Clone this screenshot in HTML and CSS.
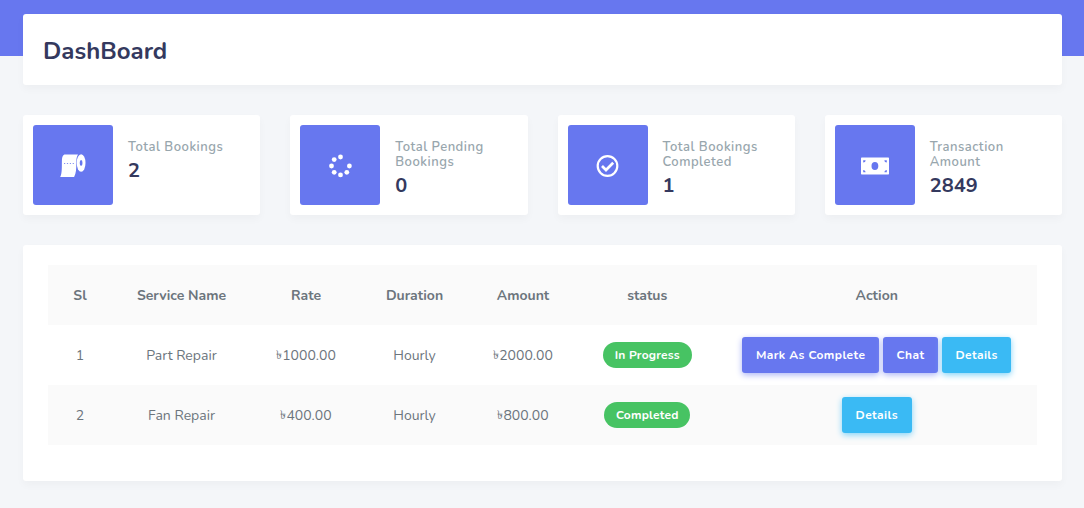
FILE: index.html
```html
<!DOCTYPE html>
<html lang="en">
<head>
<meta charset="utf-8">
<title>DashBoard</title>
<link rel="stylesheet" href="styles.css">
</head>
<body>
<main class="main">
  <header class="section-header"><h1>DashBoard</h1></header>
  <section class="stats">
    <article class="card stat">
      <div class="stat-icon">
        <svg width="28" height="28" viewBox="0 0 28 28" fill="#fff"><path d="M5.4 2.4H19C17.6 4.5 17.3 7 17.3 11c0 6-.1 10-2.2 14H1.2C3.2 21 2.8 15 2.9 9c0-3 .4-5.5 2.5-6.6z"/><ellipse cx="22.1" cy="11" rx="4.4" ry="8.7"/><ellipse cx="22.1" cy="11" rx="1.4" ry="2.9" fill="#6777ef"/><path d="M5 11.5h10" stroke="#6777ef" stroke-width=".8" stroke-dasharray="1.2 1.7"/></svg>
      </div>
      <div class="stat-body"><h2>Total Bookings</h2><p>2</p></div>
    </article>
    <article class="card stat">
      <div class="stat-icon">
        <svg width="28" height="28" viewBox="0 0 28 28" fill="#fff"><circle cx="14.5" cy="5" r="2.4"/><circle cx="8.2" cy="7.6" r="2.4"/><circle cx="5.5" cy="14" r="2.4"/><circle cx="8.2" cy="20.3" r="2.4"/><circle cx="14.5" cy="22.9" r="2.4"/><circle cx="20.8" cy="20.3" r="2.4"/><circle cx="23.4" cy="14" r="2.4"/></svg>
      </div>
      <div class="stat-body"><h2>Total Pending<br>Bookings</h2><p>0</p></div>
    </article>
    <article class="card stat">
      <div class="stat-icon">
        <svg width="28" height="28" viewBox="0 0 28 28" fill="none" stroke="#fff"><circle cx="13.5" cy="14" r="9.8" stroke-width="2.2"/><path d="M8 14l4 4 7.2-7.2" stroke-width="2.7"/></svg>
      </div>
      <div class="stat-body"><h2>Total Bookings<br>Completed</h2><p>1</p></div>
    </article>
    <article class="card stat">
      <div class="stat-icon">
        <svg width="28" height="28" viewBox="0 0 28 28"><rect y="5.5" width="28" height="17" rx=".7" fill="#fff"/><g fill="#6777ef"><ellipse cx="13.9" cy="14" rx="3.4" ry="4"/><path d="M2.2 8.3h2.4c0 1.3-1 2.3-2.4 2.3zM25.8 8.3h-2.4c0 1.3 1 2.3 2.4 2.3zM2.2 20.2h2.4c0-1.3-1-2.3-2.4-2.3zM25.8 20.2h-2.4c0-1.3 1-2.3 2.4-2.3z"/></g></svg>
      </div>
      <div class="stat-body"><h2>Transaction<br>Amount</h2><p>2849</p></div>
    </article>
  </section>
  <section class="card bookings">
    <table>
      <colgroup><col class="c-sl"><col class="c-name"><col class="c-rate"><col class="c-duration"><col class="c-amount"><col class="c-status"><col></colgroup>
      <thead><tr><th>Sl</th><th>Service Name</th><th>Rate</th><th>Duration</th><th>Amount</th><th>status</th><th>Action</th></tr></thead>
      <tbody>
        <tr><td>1</td><td>Part Repair</td><td><span class="taka">৳</span>1000.00</td><td>Hourly</td><td><span class="taka">৳</span>2000.00</td><td class="flush"><span class="badge progress">In Progress</span></td>
          <td class="flush"><div class="actions"><button class="btn mark">Mark As Complete</button><button class="btn chat">Chat</button><button class="btn info">Details</button></div></td></tr>
        <tr><td>2</td><td>Fan Repair</td><td><span class="taka">৳</span>400.00</td><td>Hourly</td><td><span class="taka">৳</span>800.00</td><td class="flush"><span class="badge completed">Completed</span></td>
          <td class="flush"><div class="actions"><button class="btn info">Details</button></div></td></tr>
      </tbody>
    </table>
  </section>
</main>
</body>
</html>
```
FILE: styles.css
```css
* { box-sizing: border-box; }
body {
  margin: 0;
  min-height: 508px;
  background: linear-gradient(#6777ef 56px, #f4f6f9 56px);
  color: #6c757d;
  font: 14px/24px Nunito, Lato, "Noto Sans", sans-serif;
}
h1, h2, p { margin: 0; }
.main { display: flex; flex-direction: column; gap: 30px; padding: 14px 22px 0 23px; }
.section-header, .card { background: #fff; border-radius: 3px; box-shadow: 0 4px 8px rgba(0, 0, 0, .03); }
.section-header { height: 71px; padding: 22px 20px 20px; display: flex; align-items: center; }
.section-header h1 { font-size: 24px; line-height: 34px; font-weight: 700; color: #34395e; }
.stats { display: grid; grid-template-columns: repeat(4, 1fr); gap: 30px; }
.stat { height: 100px; padding: 10px; display: flex; gap: 15px; }
.stat-icon { width: 80px; height: 80px; padding-top: 1px; border-radius: 3px; background: #6777ef; display: flex; align-items: center; justify-content: center; }
.stat-body { padding-top: 15px; white-space: nowrap; }
.stat-body h2 { font-size: 13px; line-height: 15px; font-weight: 600; letter-spacing: .5px; color: #98a6ad; }
.stat-body p { font-size: 20px; line-height: 32px; font-weight: 700; color: #34395e; }
.bookings { height: 236px; padding: 20px 25px; }
table { width: 100%; border-collapse: collapse; table-layout: fixed; }
.c-sl { width: 64px; }
.c-name { width: 139px; }
.c-rate, .c-amount { width: 110px; }
.c-duration { width: 107px; }
.c-status { width: 138.5px; }
tr { height: 60px; }
th, td { padding: 2px 0 0; text-align: center; vertical-align: middle; white-space: nowrap; }
td.flush { padding: 0; }
th { font-weight: 700; }
thead tr, tbody tr:nth-child(even) { background: #fafafa; }
.taka { font-size: 12px; line-height: 1; vertical-align: 1px; }
.badge { display: inline-block; height: 26px; border-radius: 13px; background: #47c363; color: #fff; font-size: 12px; line-height: 26px; font-weight: 700; letter-spacing: .2px; vertical-align: middle; }
.progress { width: 89px; }
.completed { width: 86px; }
.actions { display: flex; justify-content: center; gap: 3.9px; }
.btn { height: 36px; padding: 0; border: 0; border-radius: 3px; background: #6777ef; box-shadow: 0 2px 6px #acb5f6; color: #fff; font: 700 12px/24px Nunito, Lato, "Noto Sans", sans-serif; letter-spacing: .4px; }
.mark { width: 137px; }
.chat { width: 55px; }
.info { width: 69.5px; background: #3abaf4; box-shadow: 0 2px 6px #82d3f8; }
```
